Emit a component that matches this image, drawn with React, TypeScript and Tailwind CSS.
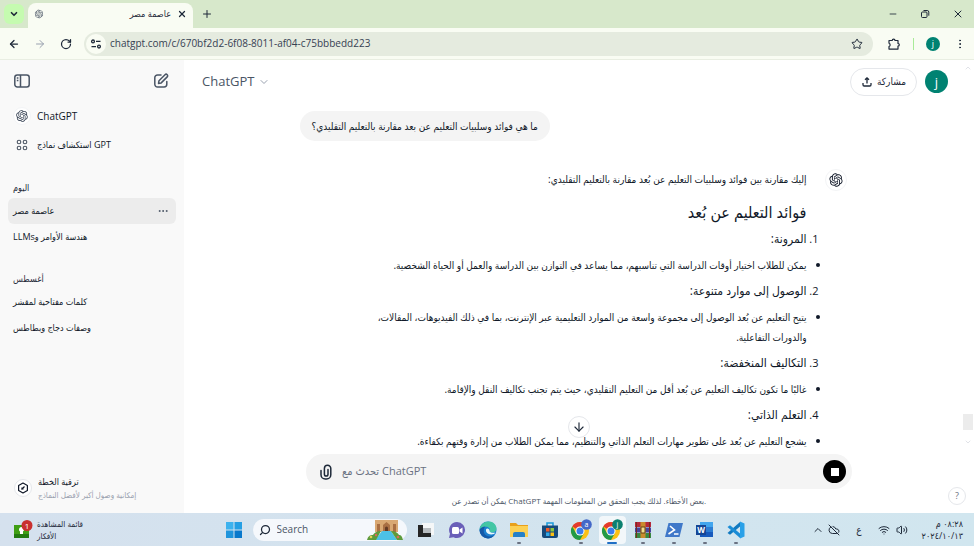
import type { ReactNode } from "react";
import {
  ArrowDown,
  ArrowLeft,
  ArrowRight,
  ChevronDown,
  ChevronUp,
  CloudOff,
  Ellipsis,
  EllipsisVertical,
  Minus,
  Plus,
  RotateCw,
  Search,
  Star,
  Volume2,
  Wifi,
  X,
} from "lucide-react";
import { RiOpenaiFill } from "react-icons/ri";

const answer = [
  {
    title: "المرونة:",
    text: "يمكن للطلاب اختيار أوقات الدراسة التي تناسبهم، مما يساعد في التوازن بين الدراسة والعمل أو الحياة الشخصية.",
  },
  {
    title: "الوصول إلى موارد متنوعة:",
    text: "يتيح التعليم عن بُعد الوصول إلى مجموعة واسعة من الموارد التعليمية عبر الإنترنت، بما في ذلك الفيديوهات، المقالات، والدورات التفاعلية.",
  },
  {
    title: "التكاليف المنخفضة:",
    text: "غالبًا ما تكون تكاليف التعليم عن بُعد أقل من التعليم التقليدي، حيث يتم تجنب تكاليف النقل والإقامة.",
  },
  {
    title: "التعلم الذاتي:",
    text: "يشجع التعليم عن بُعد على تطوير مهارات التعلم الذاتي والتنظيم، مما يمكن الطلاب من إدارة وقتهم بكفاءة.",
  },
];

function TabStrip() {
  return (
    <div className="flex h-7 shrink-0 items-end bg-[#d7e8cb] pl-1">
      <button aria-label="Search tabs" className="mb-1 flex h-5 w-5 items-center justify-center rounded-md bg-[#c5fbb0]">
        <ChevronDown className="h-2.5 w-2.5" strokeWidth={4} />
      </button>
      <div className="ml-1 flex h-[25px] w-[165px] items-center rounded-t-lg bg-[#f9fcf3] px-1.5 pb-1">
        <RiOpenaiFill className="h-2.5 w-2.5 text-gray-600" />
        <span className="ml-auto text-[9px]" dir="rtl">عاصمة مصر</span>
        <button aria-label="Close tab" className="ml-1.5">
          <X className="h-2.5 w-2.5" strokeWidth={3} />
        </button>
      </div>
      <button aria-label="New tab" className="mb-2 ml-2">
        <Plus className="h-3 w-3" strokeWidth={2} />
      </button>
      <div className="mr-2.5 mb-2 ml-auto flex items-center gap-[22px]">
        <button aria-label="Minimize">
          <Minus className="h-2.5 w-2.5" />
        </button>
        <button aria-label="Restore">
          <svg viewBox="0 0 10 10" className="h-2.5 w-2.5" fill="none" stroke="currentColor">
            <rect x="1.5" y="3" width="5.5" height="5.5" rx="1" />
            <path d="M3.5 1.5h3.7a1.6 1.6 0 0 1 1.6 1.6v3.6" />
          </svg>
        </button>
        <button aria-label="Close">
          <X className="h-3 w-3" />
        </button>
      </div>
    </div>
  );
}

function Toolbar() {
  return (
    <div className="flex h-8 shrink-0 items-center border-b border-[#e9eee2] bg-[#f9fcf3] px-2">
      <div className="flex items-center gap-[14px]">
        <button aria-label="Back"><ArrowLeft className="h-3 w-3" strokeWidth={2.5} /></button>
        <button aria-label="Forward"><ArrowRight className="h-3 w-3 text-gray-400" /></button>
        <button aria-label="Reload"><RotateCw className="h-3 w-3" strokeWidth={2.5} /></button>
      </div>
      <div className="ml-3 flex h-6 flex-1 items-center rounded-full bg-[#e5ebdf] pr-2.5 pl-0.5">
        <button aria-label="Site information" className="flex h-5 w-5 items-center justify-center rounded-full bg-[#f9fcf3]">
          <svg viewBox="0 0 12 12" className="h-3 w-3" fill="none" stroke="currentColor" strokeWidth="1.3">
            <circle cx="3" cy="3.4" r="1.4" />
            <path d="M6 3.4h4.5M1.5 8.6H6" />
            <circle cx="9" cy="8.6" r="1.4" />
          </svg>
        </button>
        <input
          aria-label="Address"
          defaultValue="chatgpt.com/c/670bf2d2-6f08-8011-af04-c75bbbedd223"
          className="ml-1 min-w-0 flex-1 bg-transparent text-[10px] text-gray-700 outline-none"
        />
        <button aria-label="Bookmark"><Star className="h-3 w-3" /></button>
      </div>
      <button aria-label="Extensions" className="ml-3.5">
        <svg viewBox="0 0 14 14" className="h-3.5 w-3.5" fill="none" stroke="currentColor" strokeWidth="1.2" strokeLinejoin="round">
          <path d="M2 3.500h3.200a1.400 1.400 0 0 1 2.800 0h3v3a1.300 1.300 0 0 1 0 2.600v3H2V9.500a1.700 1.700 0 0 0 0-3.200z" />
        </svg>
      </button>
      <span className="ml-3 h-3 w-px bg-[#a9eb98]" />
      <button aria-label="Profile" className="ml-3 h-3.5 w-3.5 rounded-full bg-[#008272] text-[9px] leading-3 text-white">j</button>
      <button aria-label="Menu" className="ml-3.5"><EllipsisVertical className="h-3 w-3" strokeWidth={2} /></button>
    </div>
  );
}

function Chats({ label, children }: { label: string; children: ReactNode }) {
  return (
    <section className="px-2 pt-[17px]">
      <h2 className="flex h-[22px] items-start px-[5px] pt-1 text-[9px] leading-4 text-gray-800">
        <span dir="rtl">{label}</span>
      </h2>
      {children}
    </section>
  );
}

function Chat({ title, active }: { title: string; active?: boolean }) {
  return (
    <a href="#" className={`flex h-[26px] items-center justify-between rounded-md px-[5px] text-[9px] ${active ? "bg-[#ececec]" : ""}`}>
      <span dir="rtl">{title}</span>
      {active && <Ellipsis className="mr-0.5 h-3 w-3 text-gray-600" />}
    </a>
  );
}

function Sidebar() {
  return (
    <aside className="flex w-[184px] shrink-0 flex-col bg-[#f9f9f9] text-gray-900">
      <div className="flex h-[42px] items-center justify-between pr-[14px] pl-[13px] text-gray-600">
        <button aria-label="Close sidebar">
          <svg viewBox="0 0 18 18" className="h-[18px] w-[18px]" fill="none" stroke="currentColor" strokeWidth="1.5">
            <rect x="1.8" y="3" width="14.4" height="12" rx="2.5" />
            <path d="M7.5 3v12M3.8 6h1.6M3.8 8.5h1.6" />
          </svg>
        </button>
        <button aria-label="New chat">
          <svg viewBox="0 0 18 18" className="h-[18px] w-[18px]" fill="none" stroke="currentColor" strokeWidth="1.5" strokeLinejoin="round">
            <path d="M9 3H5.5A2.7 2.7 0 0 0 2.800 5.700v6.600A2.700 2.700 0 0 0 5.500 15h6.600a2.700 2.700 0 0 0 2.700-2.700V9.500" strokeLinecap="round" />
            <path d="M7 8.700 13 2.700a1.500 1.500 0 0 1 2.200 2.200l-6 6L6.500 11.400z" />
          </svg>
        </button>
      </div>
      <nav className="px-[13px]">
        <a href="#" className="flex h-7 items-center gap-1.5 text-[10px]">
          <span className="flex h-[18px] w-[18px] items-center justify-center rounded-full border border-gray-100 bg-white">
            <RiOpenaiFill className="h-3.5 w-3.5 text-gray-700" />
          </span>
          <span>ChatGPT</span>
        </a>
        <a href="#" className="flex h-[29px] items-center gap-1.5 text-[9px]">
          <span className="flex h-[18px] w-[18px] items-center justify-center">
            <svg viewBox="0 0 12 12" className="h-3 w-3" fill="none" stroke="#4b5563" strokeWidth="1.1">
              <circle cx="3" cy="3" r="1.800" />
              <circle cx="9" cy="3" r="1.800" />
              <circle cx="3" cy="9" r="1.800" />
              <circle cx="9" cy="9" r="1.800" />
            </svg>
          </span>
          <span>استكشاف نماذج GPT</span>
        </a>
      </nav>
      <Chats label="اليوم">
        <Chat title="عاصمة مصر" active />
        <Chat title="هندسة الأوامر وLLMs" />
      </Chats>
      <Chats label="أغسطس">
        <Chat title="كلمات مفتاحية لمقشر" />
        <Chat title="وصفات دجاج وبطاطس" />
      </Chats>
      <a href="#" className="mt-auto mb-3 flex items-center gap-1.5 px-[14px]">
        <span className="flex h-[18px] w-[18px] items-center justify-center rounded-full border border-gray-200 bg-white">
          <svg viewBox="0 0 12 12" className="h-3 w-3" fill="none" stroke="currentColor" strokeWidth="1.200">
            <path d="M6 1l4.400 2.500v5L6 11 1.600 8.500v-5z" strokeLinejoin="round" />
            <path d="M4.500 7.500l3-3M5 5.500v1.500h1.500" />
          </svg>
        </span>
        <span className="flex flex-col items-start">
          <span dir="rtl" className="text-[9px] leading-[13px]">ترقية الخطة</span>
          <span dir="rtl" className="text-[8px] leading-[13px] text-gray-400">إمكانية وصول أكبر لأفضل النماذج</span>
        </span>
      </a>
    </aside>
  );
}

function Header() {
  return (
    <header className="flex h-[43px] shrink-0 items-center pr-[14px] pl-[18px]">
      <button className="flex items-center gap-1 text-[13px] text-gray-600">
        ChatGPT
        <ChevronDown className="h-3 w-3 text-gray-400" />
      </button>
      <button className="ml-auto flex h-7 items-center gap-1 rounded-full border border-gray-200 px-2.5 text-[10px]">
        <svg viewBox="0 0 12 12" className="h-3 w-3" fill="none" stroke="currentColor" strokeWidth="1.300">
          <path d="M6 7.500V2M4 3.800 6 1.800l2 2M2 7v1.800A1.200 1.200 0 0 0 3.200 10h5.600A1.200 1.200 0 0 0 10 8.800V7" />
        </svg>
        <span>مشاركة</span>
      </button>
      <button aria-label="Account" className="ml-2 h-[23px] w-[23px] rounded-full bg-[#008272] text-[13px] leading-5 text-white">j</button>
    </header>
  );
}

function Conversation() {
  return (
    <div dir="rtl" className="mx-auto w-full max-w-[547px] flex-1 overflow-hidden pt-2 text-[10px] text-gray-900">
      <div className="flex justify-end">
        <p className="rounded-full bg-[#f4f4f4] px-3 py-[5px] leading-5">
          ما هي فوائد وسلبيات التعليم عن بعد مقارنة بالتعليم التقليدي؟
        </p>
      </div>
      <div className="mt-[28px] flex">
        <span className="flex h-[22px] w-[22px] shrink-0 items-center justify-center rounded-full border border-gray-100">
          <RiOpenaiFill className="h-4 w-4" />
        </span>
        <div className="mr-[18px] min-w-0 flex-1 pl-14">
          <p className="leading-5">إليك مقارنة بين فوائد وسلبيات التعليم عن بُعد مقارنة بالتعليم التقليدي:</p>
          <h3 className="mt-[11px] mb-[5px] text-[16px] leading-6">فوائد التعليم عن بُعد</h3>
          <ol className="flex flex-col gap-1.5">
            {answer.map((item, i) => (
              <li key={item.title} className="flex flex-col gap-1.5 leading-5">
                <div className="relative text-[12px]">
                  <span className="absolute -right-3 text-[11px]">{i + 1}.</span>
                  {item.title}
                </div>
                <ul>
                  <li className="relative">
                    <span className="absolute top-2 -right-[13px] h-1 w-1 rounded-full bg-gray-900" />
                    {item.text}
                  </li>
                </ul>
              </li>
            ))}
          </ol>
        </div>
      </div>
    </div>
  );
}

function Composer() {
  return (
    <div className="relative flex flex-col items-center px-4">
      <form className="mt-1 flex h-[35px] w-full max-w-[546px] items-center rounded-full bg-[#f4f4f4] pr-1.5 pl-3">
        <button type="button" aria-label="Attach">
          <svg viewBox="0 0 16 16" className="h-4 w-4" fill="none" stroke="currentColor" strokeWidth="1.500" strokeLinecap="round">
            <path d="M3 6.500v4.200a4.300 4.300 0 0 0 4.300 4.300h1.200a4.300 4.300 0 0 0 4.300-4.300V4.500a3.200 3.200 0 0 0-6.400 0v5.700a1.800 1.800 0 0 0 3.600 0V5.500" />
          </svg>
        </button>
        <input aria-label="Message" placeholder="تحدث مع ChatGPT" className="ml-2 min-w-0 flex-1 bg-transparent text-[11px] outline-none placeholder:text-gray-500" />
        <button type="button" aria-label="Stop" className="flex h-[23px] w-[23px] items-center justify-center rounded-full bg-black">
          <span className="h-2 w-2 bg-white" />
        </button>
      </form>
      <p className="flex h-6 items-center text-[8px] text-gray-600">
        يمكن أن تصدر عن ChatGPT بعض الأخطاء. لذلك يجب التحقق من المعلومات المهمة.
      </p>
      <button aria-label="Scroll to bottom" className="absolute -top-[34px] flex h-[22px] w-[22px] items-center justify-center rounded-full border border-gray-200 bg-white">
        <ArrowDown className="h-3.5 w-3.5" />
      </button>
      <button aria-label="Help" className="absolute right-2 bottom-2 h-[18px] w-[18px] rounded-full border border-gray-200 text-[9px] leading-4 text-gray-500">?</button>
    </div>
  );
}

function Chrome({ badge, color }: { badge: string; color: string }) {
  return (
    <svg viewBox="0 0 22 22" className="h-[22px] w-[22px]">
      <circle cx="10" cy="12" r="9" fill="#fbc116" />
      <path d="M10 12 2.200 7.500A9 9 0 0 1 17.800 7.500H10z" fill="#e33b2e" />
      <path d="M2.200 7.500A9 9 0 0 0 10 21l3.900-6.700L6.100 14.300z" fill="#229a48" />
      <circle cx="10" cy="12" r="4.500" fill="#fff" />
      <circle cx="10" cy="12" r="3.500" fill="#3b7ded" />
      <circle cx="16.500" cy="5.500" r="5.300" fill={color} />
      <text x="16.500" y="8" fontSize="7" textAnchor="middle" fill="#fff">{badge}</text>
    </svg>
  );
}

const apps = [
  {
    name: "Task view",
    icon: (
      <svg viewBox="0 0 20 20" className="h-5 w-5">
        <path d="M6 3h12v12H6z" fill="#f5f7f8" />
        <path d="M7 8h8v7H7z" fill="#b7bcbf" />
        <path d="M2 5h5v8h8v4H2z" fill="#252525" />
      </svg>
    ),
  },
  {
    name: "Chat",
    icon: (
      <svg viewBox="0 0 20 20" className="h-5 w-5">
        <path d="M10 2a8 8 0 1 1-3.500 15.200L2 18l1-4.200A8 8 0 0 1 10 2z" fill="#6a5fb8" />
        <rect x="5" y="7" width="7" height="7" rx="1.500" fill="#fff" />
        <path d="m12.500 9.500 3-2v6l-3-2z" fill="#fff" />
      </svg>
    ),
  },
  {
    name: "Edge",
    icon: (
      <svg viewBox="0 0 20 20" className="h-5 w-5">
        <circle cx="10" cy="10" r="8.500" fill="#1b7fd0" />
        <path d="M1.500 10C2 4.500 6 1.500 10.500 1.500c5 0 8 3.500 8 7 0 2.500-2 4-4.500 4-1.800 0-2.800-.6-2.300-1.500.9-1.800-.4-4.300-3.700-4.300-3 0-5.500 1.500-6.500 3.300z" fill="#43c6a4" />
        <path d="M1.500 10c1-2 3-3.500 6-3.500-2.500 1.800-2.500 7 .8 9 2.500 1.500 6 1 8.200-.7-2 3-4.500 3.700-6.500 3.700a8.500 8.500 0 0 1-8.500-8.500z" fill="#1459a8" />
        <path d="M8 9.500c-.5 3.500 3 6 8 4.500l1.500-1.500c-1.500.6-6.500.6-6-2 .5-1-2.500-3.500-3.500-1z" fill="#e8f6fb" />
      </svg>
    ),
  },
  {
    name: "Files",
    running: true,
    icon: (
      <svg viewBox="0 0 20 20" className="h-5 w-5">
        <path d="M1 3h6l2 2h10v4H1z" fill="#e8a01c" />
        <path d="M1 6h18v11H1z" fill="#fcd053" />
        <path d="M4 17v-3a2 2 0 0 1 2-2h8a2 2 0 0 1 2 2v3z" fill="#2580c8" />
      </svg>
    ),
  },
  {
    name: "Store",
    icon: (
      <svg viewBox="0 0 20 20" className="h-5 w-5">
        <path d="M7 6V3h6v3" fill="none" stroke="#1a9adb" strokeWidth="1.500" />
        <path d="M2 5.500h16V16a2 2 0 0 1-2 2H4a2 2 0 0 1-2-2z" fill="#174a7c" />
        <path d="M6 8h3.500v3.500H6z" fill="#f05a28" />
        <path d="M10.500 8H14v3.500h-3.500z" fill="#8cc63f" />
        <path d="M6 12.500h3.500V16H6z" fill="#32a9e8" />
        <path d="M10.500 12.500H14V16h-3.500z" fill="#fcbf12" />
      </svg>
    ),
  },
  { name: "Chrome", running: true, icon: <Chrome badge="a" color="#4468c8" /> },
  { name: "Chrome, current", active: true, icon: <Chrome badge="j" color="#0b8070" /> },
  {
    name: "WinRAR",
    running: true,
    icon: (
      <svg viewBox="0 0 20 20" className="h-5 w-5">
        <path d="M2 2h16v5H2z" fill="#b5283a" />
        <path d="M2 7.500h16v5H2z" fill="#46459b" />
        <path d="M2 13h16v5H2z" fill="#3a8741" />
        <path d="M7.500 2h5v16h-5z" fill="#c98b2e" />
        <path d="M8 7h4v6H8z" fill="#f2dc8c" stroke="#6b4415" />
        <path d="M3.500 2v16M16.500 2v16" stroke="#7a2b22" />
      </svg>
    ),
  },
  {
    name: "PowerShell",
    running: true,
    icon: (
      <svg viewBox="0 0 20 20" className="h-5 w-5">
        <path d="M4.500 3H19l-3.500 14H1z" fill="#3f78c9" />
        <path d="m6 6 4.500 4L4.500 14M10 14h4.500" stroke="#fff" strokeWidth="1.600" fill="none" />
      </svg>
    ),
  },
  {
    name: "Word",
    running: true,
    icon: (
      <svg viewBox="0 0 20 20" className="h-5 w-5">
        <path d="M5 2h13v5H5z" fill="#41a5ee" />
        <path d="M5 7h13v5H5z" fill="#2b7cd3" />
        <path d="M5 12h13v5H5z" fill="#185abd" />
        <path d="M1 5h10v10H1z" fill="#164695" />
        <text x="6" y="12.500" fontSize="8" fontWeight="700" textAnchor="middle" fill="#fff">W</text>
      </svg>
    ),
  },
  {
    name: "Visual Studio Code",
    running: true,
    icon: (
      <svg viewBox="0 0 20 20" className="h-5 w-5">
        <path d="M14 1.500 18.500 3.500v13L14 18.500z" fill="#2aa1e8" />
        <path d="M14 2v4.500L4 14.800 1.500 13z" fill="#1079c0" />
        <path d="M14 18v-4.500L4 5.200 1.500 7z" fill="#1a8cd6" />
      </svg>
    ),
  },
];

function Taskbar() {
  return (
    <footer className="flex h-[33px] shrink-0 items-center bg-linear-to-r from-[#d5e1ee] to-[#d1e6ef] text-gray-800">
      <button className="flex flex-1 items-center gap-1 pl-[13px]">
        <svg viewBox="0 0 20 20" className="h-5 w-5">
          <path d="M1 5h15v13H1z" fill="#3f9f14" />
          <path d="M1 14h15v4H1z" fill="#237a10" />
          <path d="M8 7a2.500 2.500 0 0 0-1 4.500V14h3v-2.500A2.500 2.500 0 0 0 8 7z" fill="#fff" />
          <circle cx="14" cy="5.500" r="5.500" fill="#c93030" />
          <text x="14" y="8.500" fontSize="8" textAnchor="middle" fill="#fff">1</text>
        </svg>
        <span className="flex flex-col items-start text-[8px] leading-3">
          <span>قائمة المشاهدة</span>
          <span>الأفكار</span>
        </span>
      </button>
      <div className="flex items-center">
        <button aria-label="Start">
          <svg viewBox="0 0 18 18" className="h-[18px] w-[18px]">
            <path d="M1 1h7.500v7.500H1z" fill="#3db2ee" />
            <path d="M9.500 1H17v7.500H9.500z" fill="#259fe4" />
            <path d="M1 9.500h7.500V17H1z" fill="#1f94dc" />
            <path d="M9.500 9.500H17V17H9.500z" fill="#0878cc" />
          </svg>
        </button>
        <label className="mr-1 ml-2.5 flex h-[22px] w-[154px] items-center rounded-full bg-[#f5f8fc] pr-1 pl-1.5">
          <Search className="h-3 w-3 -scale-x-100" strokeWidth={2.500} />
          <input aria-label="Search" placeholder="Search" className="ml-1.5 min-w-0 flex-1 bg-transparent text-[10px] outline-none placeholder:text-gray-600" />
          <svg viewBox="0 0 36 20" className="h-5 w-9">
            <path d="M8 0h23v12H8z" fill="#d9a873" />
            <path d="M10 12V4h3v8M26 12V4h3v8M16 12V5l3.500-3L23 5v7z" fill="#a96f43" />
            <path d="M18 12V8a1.500 1.500 0 0 1 3 0v4z" fill="#633a25" />
            <path d="M15 11h9l6 9H8z" fill="#4cc1e6" />
            <path d="M0 20c1-4 3-5 6-5 1-2 4-4 8-4L9 20z" fill="#5d9b3c" />
            <path d="M36 20c-1-4-2-5-4-5-1-2-4-4-8-4l6 9z" fill="#5d9b3c" />
            <circle cx="4" cy="17" r="1.300" fill="#e5cf56" />
            <circle cx="9" cy="15" r="1.200" fill="#d96a5a" />
            <circle cx="31" cy="17" r="1.300" fill="#d96a5a" />
          </svg>
        </label>
        <div className="flex">
          {apps.map((app) => (
            <button
              key={app.name}
              aria-label={app.name}
              className={`relative mx-0.5 flex h-7 w-[27px] items-center justify-center rounded ${app.active ? "bg-white/70" : ""}`}
            >
              {app.icon}
              {app.running && <span className="absolute bottom-0 h-0.5 w-1 rounded-full bg-gray-500" />}
              {app.active && <span className="absolute bottom-0 h-0.5 w-2.5 rounded-full bg-[#1f6fc5]" />}
            </button>
          ))}
        </div>
      </div>
      <div className="flex flex-1 items-center justify-end pr-[11px]">
        <button aria-label="Hidden icons"><ChevronUp className="h-3 w-3" /></button>
        <CloudOff className="ml-1 h-3 w-3" />
        <button className="mx-4 text-[10px]">ع</button>
        <Wifi className="mr-1.5 h-3 w-3" />
        <Volume2 className="h-3 w-3" />
        <time dir="rtl" className="ml-3.5 flex flex-col text-[9px] leading-3">
          <span>٠٨:٢٨ م</span>
          <span dir="ltr">٢٠٢٤/١٠/١٣</span>
        </time>
      </div>
    </footer>
  );
}

export default function App() {
  return (
    <div className="flex h-screen flex-col overflow-hidden bg-white font-['Open_Sans','DejaVu_Sans_Condensed','DejaVu_Sans',sans-serif] text-gray-800">
      <TabStrip />
      <Toolbar />
      <div className="flex min-h-0 flex-1">
        <Sidebar />
        <main className="flex min-w-0 flex-1 flex-col">
          <div className="flex min-h-0 flex-1">
            <div className="flex min-w-0 flex-1 flex-col">
              <Header />
              <Conversation />
            </div>
            <div className="flex w-3 flex-col items-center py-1">
              <ChevronUp className="h-2 w-2 text-gray-300" />
              <span className="mt-auto mb-2 h-4 w-2.5 bg-[#ececec]" />
              <ChevronDown className="h-2 w-2 text-gray-300" />
            </div>
          </div>
          <Composer />
        </main>
      </div>
      <Taskbar />
    </div>
  );
}
